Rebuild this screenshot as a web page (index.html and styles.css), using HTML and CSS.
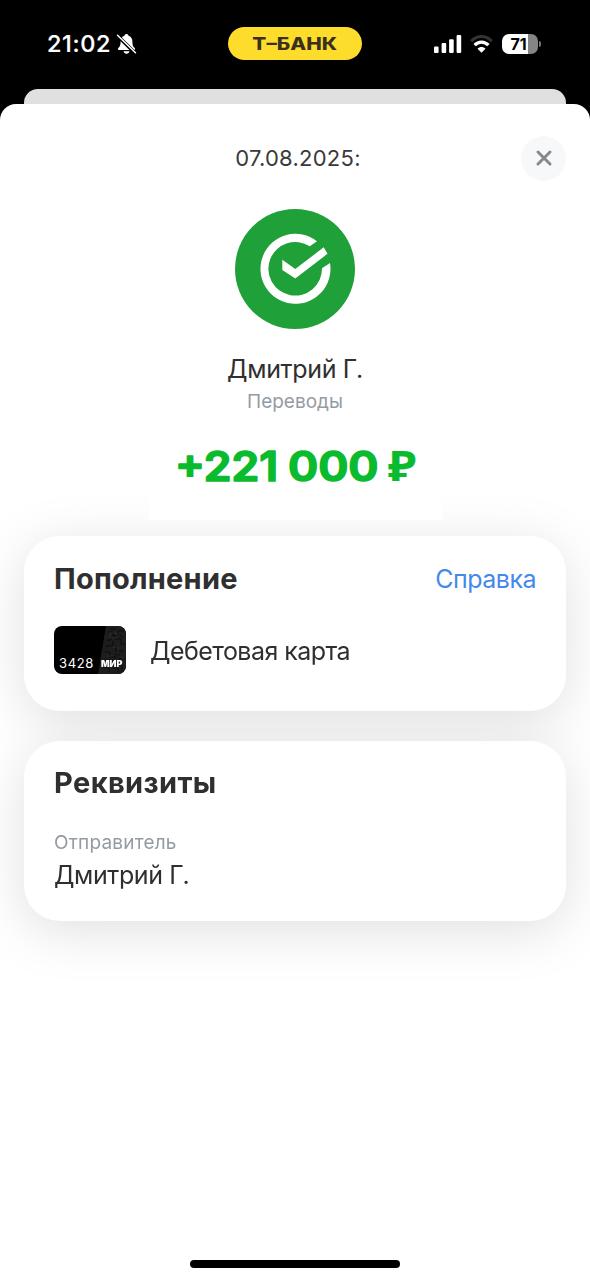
FILE: index.html
```html
<!DOCTYPE html>
<html lang="ru">
<head>
<meta charset="utf-8">
<title>Пополнение</title>
<link rel="stylesheet" href="styles.css">
</head>
<body>
<div class="screen">
  <div class="status">
    <div class="clock">
      <span class="time">21:02</span>
      <svg class="bell" width="21" height="22" viewBox="0 0 21 22">
        <path d="M10.500 1c1.500 0 2 .9 2 1.800 2.600.8 3.900 3 3.900 5.700 0 4.300.8 5 2.300 6.500.8.900.4 2-.7 2H3c-1.100 0-1.500-1.100-.7-2C3.800 13.500 4.600 12.800 4.600 8.500c0-2.700 1.300-4.900 3.900-5.700 0-.9.500-1.800 2-1.800z" fill="#fff"/>
        <path d="M7.500 18.200h6c-.3 1.500-1.400 2.500-3 2.500s-2.700-1-3-2.500z" fill="#fff"/>
        <path d="M1.500 2.800l18 17.700" stroke="#000" stroke-width="3.600"/>
        <path d="M1.500 2.200l18 17.600" stroke="#fff" stroke-width="1.500" stroke-linecap="round"/>
      </svg>
    </div>
    <div class="pill"><span class="brand">Т–БАНК</span></div>
    <div class="indicators">
      <svg class="signal" width="28" height="18" viewBox="0 0 28 18" fill="#fff">
        <rect x="0" y="11.500" width="4.600" height="6.500" rx="1"/>
        <rect x="7.600" y="8" width="4.600" height="10" rx="1"/>
        <rect x="15.100" y="4.300" width="4.600" height="13.700" rx="1"/>
        <rect x="22.600" y="0" width="4.600" height="18" rx="1"/>
      </svg>
      <svg class="wifi" width="23" height="18" viewBox="0 0 23 18" fill="none">
        <path d="M1.200 6.200C7-.1 16-.1 21.800 6.200" stroke="#333" stroke-width="3"/>
        <path d="M4.600 10.200C8.500 6 14.500 6 18.400 10.200" stroke="#fff" stroke-width="3.300"/>
        <path d="M11.500 17.800L7.500 13.800c2.200-2.400 5.800-2.400 8 0z" fill="#fff"/>
      </svg>
      <div class="battery"><span class="level">71</span></div>
      <div class="nub"></div>
    </div>
  </div>
  <div class="sheet-behind"></div>
  <main class="sheet">
    <header class="top">
      <span class="date">07.08.2025:</span>
      <button class="close" aria-label="Закрыть">
        <svg width="16" height="16" viewBox="0 0 16 16"><path d="M2 2l12 12M14 2L2 14" stroke="#86888b" stroke-width="2.900" stroke-linecap="round"/></svg>
      </button>
    </header>
    <svg class="logo" width="120" height="120" viewBox="0 0 120 120">
      <circle cx="60" cy="60" r="60" fill="#20a038"/>
      <path d="M82 32.200A35 35 0 1 0 95 54L87 59.300A26.800 26.800 0 1 1 74.800 37.300z" fill="#fff"/>
      <path d="M47.300 50.800L60.300 60 88.700 38.300 92.500 44.800 60.300 69.500 47.300 61z" fill="#fff"/>
    </svg>
    <div class="name">Дмитрий Г.</div>
    <div class="category">Переводы</div>
    <div class="amount-box">
      <svg class="amount" width="293" height="60" viewBox="0 0 293 60">
        <text class="sum" x="26" y="46.500" textLength="103" lengthAdjust="spacingAndGlyphs">+221</text>
        <text class="sum" x="139" y="46.500" textLength="90.500" lengthAdjust="spacingAndGlyphs">000</text>
        <text class="ruble" x="239" y="46.500" textLength="28" lengthAdjust="spacingAndGlyphs">₽</text>
      </svg>
    </div>
    <div class="cards">
      <section class="card card-topup">
        <div class="card-head">
          <h2 class="title title-topup">Пополнение</h2>
          <a class="link">Справка</a>
        </div>
        <div class="account">
          <div class="bankcard">
            <svg class="pattern" width="28" height="48" viewBox="0 0 28 48">
              <path d="M8 0H28V48H0z" fill="#1d1d1d"/>
              <path d="M10 6h5v4h5V5h6M9 14h4v-3M17 13h6v5h4M8 20h7v-5M18 19v6h7M7 26h5v5h6v-4M21 28v5h6M6 34h6v4M15 33v5h7v-3M5 42h6v4M15 42h5v5M24 39v7M12 3h6M22 9l3 3" fill="none" stroke="#0a0a0a" stroke-width="1"/>
              <path d="M12 7h7v5h-7zM14 21h6v5M9 30h6M20 31h5v5" fill="none" stroke="#303030" stroke-width=".7"/>
            </svg>
            <span class="digits">3428</span>
            <span class="mir">МИР</span>
          </div>
          <span class="account-name">Дебетовая карта</span>
        </div>
      </section>
      <section class="card card-details">
        <h2 class="title title-details">Реквизиты</h2>
        <div class="label">Отправитель</div>
        <div class="value">Дмитрий Г.</div>
      </section>
    </div>
    <div class="home"></div>
  </main>
</div>
</body>
</html>
```
FILE: styles.css
```css
* { box-sizing: border-box; margin: 0; padding: 0; }
body { background: #000; font-family: Inter, "Liberation Sans", sans-serif; color: #2f2f2f; }
.screen { width: 590px; height: 1280px; display: flex; flex-direction: column; overflow: hidden; background: #000; }
span, .name, .category, .title, .link, .label, .value { white-space: nowrap; }

.status { height: 88px; display: grid; grid-template-columns: 228px 134px 228px; align-items: center; }
.clock { display: flex; align-items: center; gap: 5px; padding-left: 47px; color: #fff; }
.time { font-size: 23.5px; font-weight: 500; line-height: 28px; letter-spacing: .6px; -webkit-text-stroke: .2px #fff; }
.pill { height: 33px; margin-bottom: 1px; border-radius: 17px; background: #fddc2b; display: flex; align-items: center; justify-content: center; }
.brand { font-size: 17px; font-weight: 800; line-height: 20px; color: #3a3020; transform: scaleX(1.22); }
.indicators { display: flex; align-items: center; padding-left: 72px; }
.wifi { margin-left: 8px; }
.battery { width: 36px; height: 20px; margin-left: 9px; border-radius: 7px; background: linear-gradient(90deg, #fff 71%, #858585 71%); display: flex; align-items: center; justify-content: center; }
.level { font-size: 16px; font-weight: 700; line-height: 20px; color: #000; padding-right: 3px; }
.nub { width: 2px; height: 6px; margin-left: 1px; border-radius: 0 2px 2px 0; background: #777; }

.sheet-behind { height: 15px; margin: 1px 24px 0; flex: none; border-radius: 14px 14px 0 0; background: #e0e0e0; }
.sheet { flex: 1; display: flex; flex-direction: column; align-items: center; background: #fff; border-radius: 16px 16px 0 0; padding-top: 31px; }
.top { width: 100%; height: 46px; display: grid; grid-template-columns: 1fr auto 1fr; align-items: center; padding: 0 24px; }
.date { grid-column: 2; font-size: 22px; line-height: 28px; color: #3a3a3a; padding-left: 6px; letter-spacing: .25px; }
.close { grid-column: 3; justify-self: end; width: 45px; height: 45px; border: 0; border-radius: 50%; background: #f7f8f9; display: flex; align-items: center; justify-content: center; }
.logo { margin-top: 28px; }
.name { margin-top: 24px; font-size: 25px; line-height: 32px; letter-spacing: -.35px; }
.category { margin-top: 5px; font-size: 19px; line-height: 24px; color: #959ba4; }
.amount-box { position: relative; z-index: 1; width: 293px; height: 91px; margin-top: 15px; background: #fff; display: flex; justify-content: center; padding-top: 5px; }
.amount { display: block; fill: #0bbb2e; stroke: #0bbb2e; stroke-linejoin: round; }
.sum { font-size: 41px; font-weight: 600; stroke-width: 1.7px; }
.ruble { font-family: "Noto Sans", sans-serif; font-size: 42px; font-weight: 700; stroke-width: .2px; }

.cards { width: 542px; margin-top: 16px; display: flex; flex-direction: column; gap: 30px; filter: drop-shadow(0 10px 26px rgba(0, 0, 0, .12)); }
.card { background: #fff; border-radius: 36px; padding: 0 30px; }
.card-topup { height: 175px; padding-top: 26px; }
.card-details { height: 180px; padding-top: 25px; }
.card-head { display: flex; justify-content: space-between; align-items: center; height: 34px; }
.title { font-size: 29px; font-weight: 700; line-height: 34px; }
.title-topup { letter-spacing: .25px; }
.title-details { letter-spacing: .4px; }
.link { font-size: 25px; line-height: 34px; color: #4588ed; letter-spacing: -.5px; }
.account { display: flex; align-items: center; gap: 24px; margin-top: 30px; height: 48px; }
.bankcard { width: 72px; height: 48px; border-radius: 8px; background: #000; overflow: hidden; display: grid; grid-template-columns: 44px 28px; }
.bankcard > * { grid-row: 1; }
.pattern { grid-column: 2; }
.digits { grid-column: 1; align-self: end; padding: 0 0 3px 5px; font-size: 13px; line-height: 16px; color: #fff; letter-spacing: .6px; }
.mir { grid-column: 2; align-self: end; padding: 0 0 5px 3px; font-size: 9px; font-weight: 900; line-height: 11px; color: #fff; z-index: 1; }
.account-name { font-size: 25px; line-height: 32px; letter-spacing: -.55px; padding-top: 2px; }
.label { margin-top: 31px; font-size: 19px; line-height: 24px; color: #959ba4; letter-spacing: .2px; }
.value { margin-top: 4px; font-size: 25px; line-height: 32px; letter-spacing: -.4px; }
.home { width: 210px; height: 8px; margin: auto 0 12px; border-radius: 4px; background: #000; }
```
